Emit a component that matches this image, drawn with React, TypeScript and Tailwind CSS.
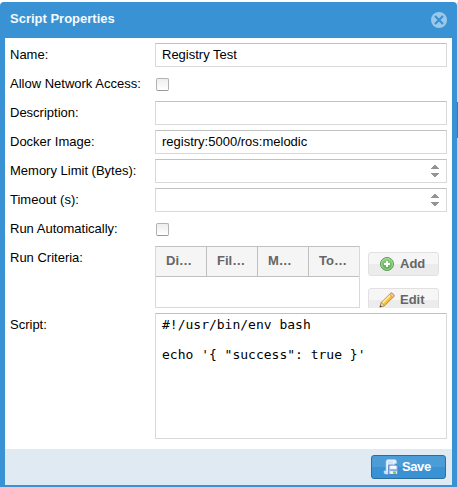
import React from "react";

function Row({ label, children }: { label: string; children?: React.ReactNode }) {
  return (
    <div className="flex h-6 shrink-0">
      <label className="w-[145px] shrink-0 whitespace-nowrap leading-6">{label}</label>
      {children}
    </div>
  );
}

const frame = "border border-[#d9d9d9] border-t-[#c1c1c1] bg-white";

function TextField({ value = "" }: { value?: string }) {
  return <div className={`${frame} h-6 w-[292px] px-1.5 leading-[22px]`}>{value}</div>;
}

function NumberField() {
  return (
    <div className={`${frame} flex h-6 w-[292px] items-center justify-end pr-[7px]`}>
      <svg width="8" height="12" viewBox="0 0 8 12" fill="#949494" shapeRendering="crispEdges">
        <path d="M3 0h2v1h1v1h1v1h1v1H0V3h1V2h1V1h1zM0 8h8v1H7v1H6v1H5v1H3v-1H2v-1H1V9H0z" />
      </svg>
    </div>
  );
}

function Checkbox() {
  return (
    <div className="ml-px mt-[6px] h-[13px] w-[13px] rounded-[2px] border border-[#b2b2b2] border-b-[#999] bg-linear-to-b from-[#eeeeee] to-white" />
  );
}

function AddIcon() {
  return (
    <svg width="16" height="16" viewBox="0 0 16 16">
      <defs>
        <linearGradient id="add" x2="0" y2="1">
          <stop stopColor="#93cf88" />
          <stop offset="1" stopColor="#4fae42" />
        </linearGradient>
      </defs>
      <circle cx="8" cy="8" r="6.5" fill="url(#add)" stroke="#5a9e55" />
      <circle cx="8" cy="8" r="5.4" fill="none" stroke="#b5dcae" strokeWidth=".8" />
      <path d="M7 5h2v2h2v2H9v2H7V9H5V7h2z" fill="#fff" />
    </svg>
  );
}

function PencilIcon() {
  return (
    <svg width="16" height="16" viewBox="0 0 16 16">
      <path d="M1 15l1.3-4.5L11.5 1.3q1.2-.8 2.3.3l.9 1q.8 1.1-.1 2.1L5.5 13.8z" fill="#f8cc4f" stroke="#b1732a" strokeWidth=".8" />
      <path d="M3.6 10.8l8.3-8.4" stroke="#ffebac" strokeWidth="1.4" />
      <path d="M5 12.6l7.7-7.7" stroke="#f0aa2c" strokeWidth="1" />
      <path d="M10.7 2.2l.8-.8q1.2-.8 2.3.3l.9 1q.8 1.1-.1 2.1l-.8.8z" fill="#f9c79c" stroke="#c58258" strokeWidth=".7" />
      <path d="M2.3 10.7l3 3L1 15z" fill="#f2dbbd" stroke="#8d714f" strokeWidth=".5" />
      <path d="M1.5 13.2l1.3 1.2L.7 15.2z" fill="#38332c" />
    </svg>
  );
}

function SaveScriptIcon() {
  return (
    <svg width="16" height="16" viewBox="0 0 16 16">
      <path d="M3 2.4Q3 .6 5 .6h6.5q2 0 2 2v1.9h-1.8V13q0 2-2 2h-7Q1 15 1 13v-1h2z" fill="#e8f2fd" stroke="#a9cbef" strokeWidth=".7" />
      <path d="M5 3.2h5M5 5.2h5" stroke="#b3cfec" strokeWidth=".8" />
      <path d="M1.2 12.4h4v2.2H2.7z" fill="#cde1f7" />
      <path d="M5.7 6.2h8l1.2 1.2v8H5.7z" fill="#b9d2f3" stroke="#4678bd" strokeWidth=".9" />
      <path d="M7.2 6.7h6v3.1h-6z" fill="#f8fbff" />
      <path d="M6.7 10.6h7.5v1H6.7z" fill="#6492d0" />
      <path d="M7.2 12.2h6.4v2.7H7.2z" fill="#eef7e9" />
      <path d="M10 12.4h3v2.4h-3z" fill="#78c663" />
    </svg>
  );
}

function ToolButton({ icon, label }: { icon: React.ReactNode; label: string }) {
  return (
    <button className="flex h-6 w-[71px] shrink-0 rounded-[3px] border border-[#e1e1e1] bg-linear-to-b from-[#f6f6f6] from-50% to-[#ececec] to-50% pl-[10px] font-bold leading-[21px] text-[#666]">
      <span className="mt-[3px] mr-[5px]">{icon}</span>
      {label}
    </button>
  );
}

const columns = ["Di…", "Fil…", "M…", "To…"];

export default function App() {
  return (
    <div className="flex h-[487px] w-[458px] overflow-hidden bg-white pt-0.5 font-['Liberation_Sans',Arial,sans-serif] text-[13px] text-black">
      <div className="flex w-[457px] flex-col rounded-t-[4px] bg-[#3892d3] px-[5px] pb-0.5">
        <header className="flex h-9 shrink-0 items-center justify-between pl-[5px] pr-[5px] font-bold text-[#f5fafd]">
          <span className="relative -top-px">Script Properties</span>
          <svg width="16" height="16" viewBox="0 0 16 16">
            <circle cx="8" cy="8" r="8" fill="#9bc8e9" />
            <path d="M4 4l8 8m0-8l-8 8" stroke="#3892d3" strokeWidth="2.2" />
          </svg>
        </header>
        <main className="flex h-[411px] shrink-0 flex-col gap-[5px] bg-white pl-[5px] pt-[5px]">
          <Row label="Name:"><TextField value="Registry Test" /></Row>
          <Row label="Allow Network Access:"><Checkbox /></Row>
          <Row label="Description:"><TextField /></Row>
          <Row label="Docker Image:"><TextField value="registry:5000/ros:melodic" /></Row>
          <Row label="Memory Limit (Bytes):"><NumberField /></Row>
          <Row label="Timeout (s):"><NumberField /></Row>
          <Row label="Run Automatically:"><Checkbox /></Row>
          <div className="flex h-[62px] shrink-0">
            <label className="w-[145px] shrink-0 leading-6">Run Criteria:</label>
            <div className={`${frame} h-[62px] w-[205px]`}>
              <div className="flex h-[30px] border-b border-[#c0c0c0] bg-[#f5f5f5]">
                {columns.map((name) => (
                  <div key={name} className="w-[51px] border-r border-[#c0c0c0] pl-[10px] font-bold leading-[27px] text-[#666] last:w-[50px] last:border-r-0">
                    {name}
                  </div>
                ))}
              </div>
            </div>
            <div className="ml-2 flex h-[62px] flex-col gap-3 overflow-hidden pt-1.5">
              <ToolButton icon={<AddIcon />} label="Add" />
              <ToolButton icon={<PencilIcon />} label="Edit" />
            </div>
          </div>
          <div className="flex shrink-0">
            <label className="w-[145px] shrink-0 leading-6">Script:</label>
            <pre className={`${frame} h-[126px] w-[292px] px-1.5 pt-[3px] font-['DejaVu_Sans_Mono',monospace] text-[13px] leading-[15px]`}>
              {"#!/usr/bin/env bash\n\necho '{ \"success\": true }'"}
            </pre>
          </div>
        </main>
        <footer className="flex h-9 shrink-0 justify-end bg-[#dfeaf2] pr-1.5 pt-1.5">
          <button className="flex h-6 w-[75px] rounded-[3px] border border-[#2a6d9e] bg-linear-to-b from-[#4b9cd7] from-50% to-[#3892d3] to-50% pl-[11px] font-bold leading-[21px] text-white">
            <span className="mr-[3px] mt-[3px]"><SaveScriptIcon /></span>
            <span className="tracking-[-0.4px]">Save</span>
          </button>
        </footer>
      </div>
      <div className="flex w-px flex-col">
        <div className="h-[100px] bg-[#d8dcdf]" />
        <div className="h-9 bg-[#347dad]" />
        <div className="h-[349px] bg-[#c8d0d6]" />
      </div>
    </div>
  );
}
